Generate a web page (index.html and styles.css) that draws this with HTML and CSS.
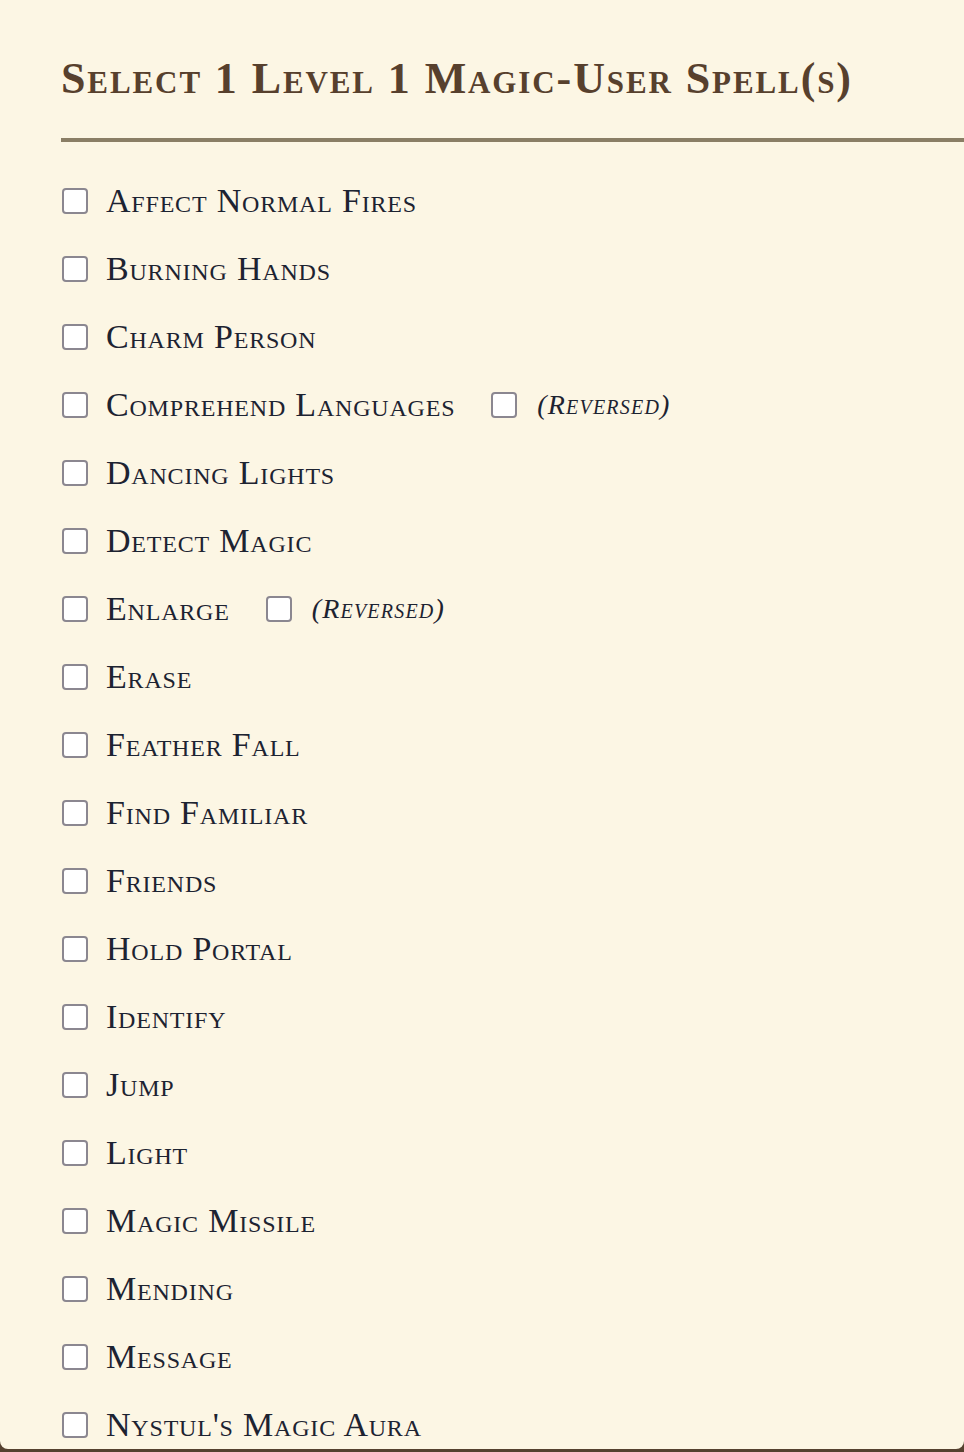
FILE: index.html
```html
<!DOCTYPE html>
<html lang="en">
<head>
<meta charset="utf-8">
<title>Select Spells</title>
<link rel="stylesheet" href="styles.css">
</head>
<body>
<div class="card">
  <h2 class="title">Select 1 Level 1 Magic-User Spell(s)</h2>
  <div class="rule"></div>
  <ul class="spells">
    <li class="spell"><label class="opt"><input type="checkbox" class="box"><span class="name">Affect Normal Fires</span></label></li>
    <li class="spell"><label class="opt"><input type="checkbox" class="box"><span class="name">Burning Hands</span></label></li>
    <li class="spell"><label class="opt"><input type="checkbox" class="box"><span class="name">Charm Person</span></label></li>
    <li class="spell"><label class="opt"><input type="checkbox" class="box"><span class="name">Comprehend Languages</span></label><label class="opt rev"><input type="checkbox" class="box"><span class="revname">(Reversed)</span></label></li>
    <li class="spell"><label class="opt"><input type="checkbox" class="box"><span class="name">Dancing Lights</span></label></li>
    <li class="spell"><label class="opt"><input type="checkbox" class="box"><span class="name">Detect Magic</span></label></li>
    <li class="spell"><label class="opt"><input type="checkbox" class="box"><span class="name">Enlarge</span></label><label class="opt rev"><input type="checkbox" class="box"><span class="revname">(Reversed)</span></label></li>
    <li class="spell"><label class="opt"><input type="checkbox" class="box"><span class="name">Erase</span></label></li>
    <li class="spell"><label class="opt"><input type="checkbox" class="box"><span class="name">Feather Fall</span></label></li>
    <li class="spell"><label class="opt"><input type="checkbox" class="box"><span class="name">Find Familiar</span></label></li>
    <li class="spell"><label class="opt"><input type="checkbox" class="box"><span class="name">Friends</span></label></li>
    <li class="spell"><label class="opt"><input type="checkbox" class="box"><span class="name">Hold Portal</span></label></li>
    <li class="spell"><label class="opt"><input type="checkbox" class="box"><span class="name">Identify</span></label></li>
    <li class="spell"><label class="opt"><input type="checkbox" class="box"><span class="name">Jump</span></label></li>
    <li class="spell"><label class="opt"><input type="checkbox" class="box"><span class="name">Light</span></label></li>
    <li class="spell"><label class="opt"><input type="checkbox" class="box"><span class="name">Magic Missile</span></label></li>
    <li class="spell"><label class="opt"><input type="checkbox" class="box"><span class="name">Mending</span></label></li>
    <li class="spell"><label class="opt"><input type="checkbox" class="box"><span class="name">Message</span></label></li>
    <li class="spell"><label class="opt"><input type="checkbox" class="box"><span class="name">Nystul's Magic Aura</span></label></li>
  </ul>
</div>
</body>
</html>
```

FILE: styles.css
```css
html, body {
  margin: 0;
  padding: 0;
}
body {
  background: #55412f;
}
.card {
  background: #fcf6e4;
  border-radius: 0 0 8px 8px;
  padding: 54px 0 7px 61px;
  overflow: hidden;
}
.title {
  margin: 0;
  font-family: "Liberation Serif", serif;
  font-variant: small-caps;
  font-weight: bold;
  font-size: 44px;
  letter-spacing: 1.9px;
  line-height: 49px;
  color: #57402d;
  white-space: nowrap;
}
.rule {
  height: 4px;
  background: #8a7e65;
  margin-top: 35px;
}
.spells {
  list-style: none;
  margin: 42px 0 0;
  padding: 0;
  display: flex;
  flex-direction: column;
  gap: 34px;
}
.spell {
  display: flex;
  align-items: center;
  height: 34px;
}
.opt {
  display: flex;
  align-items: center;
  gap: 18px;
  cursor: pointer;
}
.rev {
  margin-left: 35px;
  gap: 20px;
}
.box {
  appearance: none;
  -webkit-appearance: none;
  margin: 0 0 0 1px;
  width: 26px;
  height: 26px;
  border: 2px solid #8b8790;
  border-radius: 4px;
  background: #ffffff;
  flex: none;
}
.name {
  font-family: "Liberation Serif", serif;
  font-variant: small-caps;
  font-size: 34px;
  letter-spacing: 0.8px;
  line-height: 34px;
  color: #1d2331;
  white-space: nowrap;
}
.revname {
  font-family: "Liberation Serif", serif;
  font-variant: small-caps;
  font-style: italic;
  font-size: 28px;
  letter-spacing: 1.2px;
  line-height: 34px;
  color: #1d2331;
  white-space: nowrap;
}
```
